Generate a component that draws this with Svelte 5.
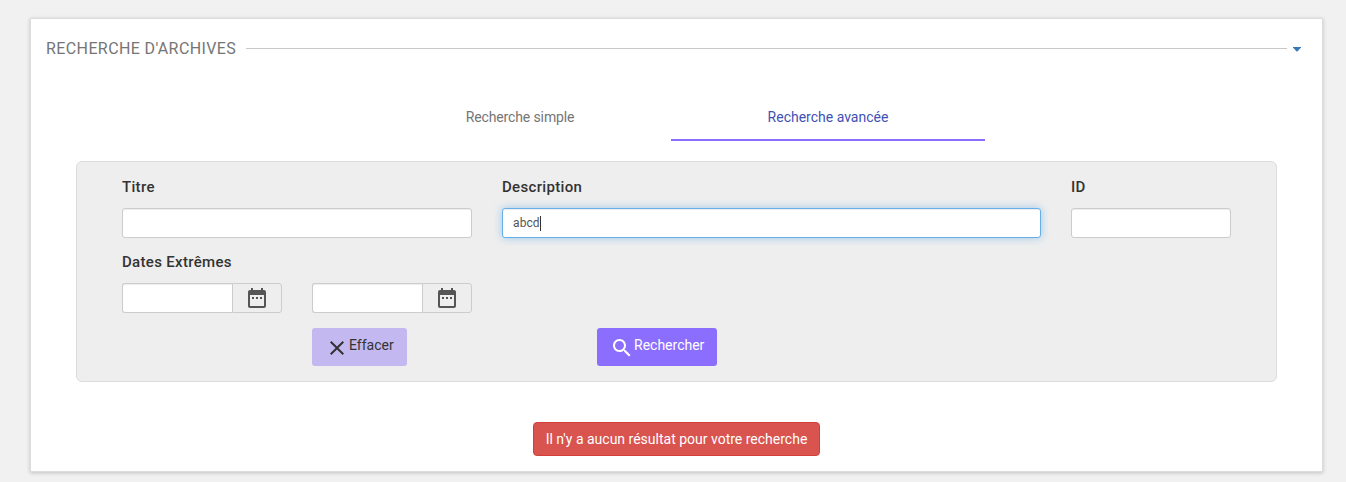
<script>
  let title = $state('');
  let description = $state('abcd');
  let id = $state('');
  const dates = ['Date de début', 'Date de fin'];
</script>

<main class="card">
  <header>
    <h1>RECHERCHE D'ARCHIVES</h1>
    <span class="rule"></span>
    <svg class="caret" width="8" height="5" viewBox="0 0 8 5"><path d="M0 0h8v.6L4.4 4.4h-.8L0 .6z" fill="#337ab7" /></svg>
  </header>

  <nav>
    <span class="tab simple">Recherche simple</span>
    <span class="tab active">Recherche avancée</span>
  </nav>

  <section class="panel">
    <div class="fields">
      <label><b>Titre</b><input bind:value={title} /></label>
      <label><b>Description</b><span class="control focused"><span>{description}</span><i class="cursor"></i></span></label>
      <label><b>ID</b><input bind:value={id} /></label>
    </div>
    <b class="dates-label">Dates Extrêmes</b>
    <div class="dates">
      {#each dates as date}
        <div class="date">
          <input aria-label={date} />
          <span class="addon">
            <svg width="24" height="24" viewBox="0 0 24 24"><path fill="#555" d="M9 11H7v2h2v-2zm4 0h-2v2h2v-2zm4 0h-2v2h2v-2zm2-7h-1V2h-2v2H8V2H6v2H5c-1.11 0-1.99.9-1.99 2L3 20c0 1.1.89 2 2 2h14c1.1 0 2-.9 2-2V6c0-1.1-.9-2-2-2zm0 16H5V9h14v11z" /></svg>
          </span>
        </div>
      {/each}
    </div>
    <div class="actions">
      <button class="clear">
        <svg width="24" height="24" viewBox="0 0 24 24"><path fill="#333" d="M19 6.41L17.59 5 12 10.59 6.41 5 5 6.41 10.59 12 5 17.59 6.41 19 12 13.41 17.59 19 19 17.59 13.41 12z" /></svg><span>Effacer</span>
      </button>
      <button class="search">
        <svg width="24" height="24" viewBox="0 0 24 24"><path fill="#fff" d="M15.5 14h-.79l-.28-.27C15.41 12.59 16 11.11 16 9.5 16 5.91 13.09 3 9.5 3S3 5.91 3 9.5 5.91 16 9.5 16c1.61 0 3.09-.59 4.23-1.57l.27.28v.79l5 4.99L20.49 19l-4.99-5zm-6 0C7.01 14 5 11.99 5 9.5S7.01 5 9.5 5 14 7.01 14 9.5 11.99 14 9.5 14z" /></svg><span>Rechercher</span>
      </button>
    </div>
  </section>

  <div class="message">Il n'y a aucun résultat pour votre recherche</div>
</main>

<style>
  :global(body) { background: #f1f1f1; font-family: Roboto, sans-serif; font-size: 14px; line-height: 20px; color: #333; display: flow-root; min-height: 482px; }
  * { box-sizing: border-box; }
  .card { margin: 19px 24px 0 31px; width: 1291px; height: 452px; background: #fff; box-shadow: 0 0 0 1px #dcdcdc, 0 1px 4px 1px rgba(0,0,0,.2); display: flow-root; }
  header { display: flex; align-items: center; height: 20px; margin: 19px 21px 0 15px; }
  h1 { margin: 2px 0 0; font-size: 16px; font-weight: 400; line-height: 20px; color: #757575; letter-spacing: .4px; width: 200px; white-space: nowrap; }
  .rule { flex: 1; height: 1px; background: #c8c8c8; margin-right: 6px; }
  .caret { margin-top: 3px; }
  nav { display: flex; margin: 35px 0 0 332px; }
  .tab { width: 314px; height: 48px; line-height: 48px; text-align: center; color: #757575; margin-right: -6px; }
  .simple { letter-spacing: -.12px; }
  .tab.active { color: #3f51b5; border-bottom: 2px solid #8c6eff; }
  .panel { margin: 20px 46px 0 45px; width: 1201px; height: 221px; background: #eee; border: 1px solid #dcdcdc; border-radius: 6px; padding: 15px 45px; }
  .fields { display: grid; grid-template-columns: 350px 539px 160px; gap: 30px; height: 61px; }
  label { display: block; }
  b { display: block; height: 20px; font-size: 15px; font-weight: 500; letter-spacing: .32px; }
  label b { margin-bottom: 11px; }
  input, .control { display: block; width: 100%; height: 30px; padding: 5px 10px; background: #fff; border: 1px solid #ccc; border-radius: 3px; box-shadow: inset 0 1px 1px rgba(0,0,0,.075); outline: 0; font: 12px/18px Roboto, sans-serif; color: #555; }
  .focused { display: flex; align-items: center; letter-spacing: .1px; border-color: #66afe9; box-shadow: inset 0 1px 1px rgba(0,0,0,.075), 0 0 8px rgba(102,175,233,.6); }
  .cursor { width: 1px; height: 15px; background: #333; }
  .dates-label { margin-top: 14px; }
  .dates { display: flex; gap: 30px; margin-top: 11px; }
  .date { display: flex; width: 160px; }
  .date input { width: 110px; border-right: 0; border-radius: 3px 0 0 3px; }
  .addon { width: 50px; height: 30px; display: flex; align-items: center; justify-content: center; border: 1px solid #ccc; border-radius: 0 3px 3px 0; background: #eee; }
  .actions { display: flex; margin: 15px 0 0 190px; gap: 190px; }
  button { display: flex; height: 38px; border: 0; border-radius: 3px; padding: 7px 13px; font: 14px/20px Roboto, sans-serif; }
  button svg { flex: none; margin-top: 1px; }
  .clear { width: 95px; background: #c4b8f0; color: #333; }
  .search { width: 120px; background: #8c6eff; color: #fff; }
  .message { width: 287px; height: 34px; margin: 40px auto 0 502px; border: 1px solid #d43f3a; border-radius: 4px; background: #d9534f; color: #fff; text-align: center; line-height: 32px; white-space: nowrap; }
</style>
